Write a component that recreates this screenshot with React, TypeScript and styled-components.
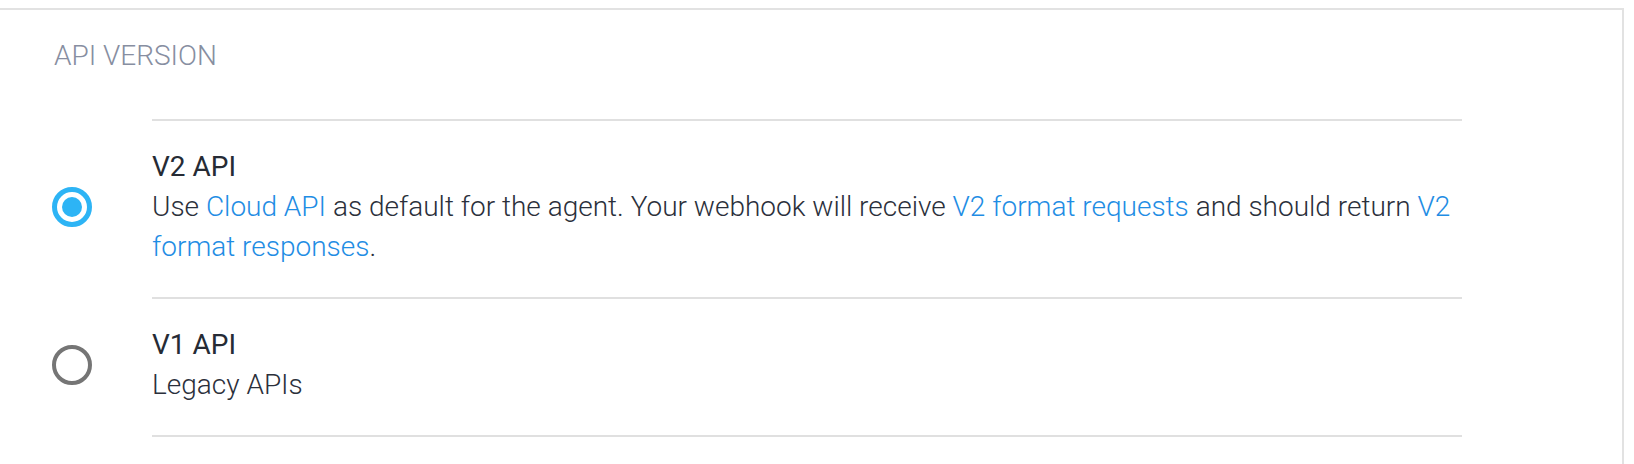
import React from "react";
import styled, { createGlobalStyle } from "styled-components";

const GlobalStyle = createGlobalStyle`
  html, body {
    margin: 0;
    padding: 0;
    background: #ffffff;
  }
  body {
    font-family: Roboto, "Liberation Sans", Arial, sans-serif;
    -webkit-font-smoothing: antialiased;
  }
`;

const Card = styled.section`
  box-sizing: border-box;
  width: 1624px;
  margin-top: 8px;
  border-top: 2px solid #e2e2e2;
  border-right: 2px solid #e2e2e2;
  background: #ffffff;
  padding: 26px 0 40px 52px;
`;

const SectionTitle = styled.h2`
  margin: 0 0 43px 2px;
  font-size: 28px;
  line-height: 40px;
  font-weight: 300;
  color: #878ea1;
  letter-spacing: 0;
`;

const Divider = styled.div`
  margin-left: 100px;
  width: 1310px;
  height: 2px;
  background: #e0e0e0;
`;

const Option = styled.label`
  display: flex;
  align-items: center;
  padding: 26px 0 30px;
  cursor: pointer;
`;

const RadioCol = styled.div`
  width: 100px;
  flex: none;
  display: flex;
  align-items: center;
`;

const Radio = styled.span<{ $checked?: boolean }>`
  box-sizing: border-box;
  width: 40px;
  height: 40px;
  border-radius: 50%;
  border: ${(p) => (p.$checked ? "5px solid #2db4f5" : "4px solid #757575")};
  display: flex;
  align-items: center;
  justify-content: center;
  &::after {
    content: "";
    display: ${(p) => (p.$checked ? "block" : "none")};
    width: 20px;
    height: 20px;
    border-radius: 50%;
    background: #2db4f5;
  }
`;

const Body = styled.div`
  width: 1310px;
  display: flex;
  flex-direction: column;
`;

const OptionTitle = styled.div`
  font-size: 28px;
  line-height: 40px;
  font-weight: 400;
  color: #262b35;
`;

const Description = styled.div`
  font-size: 28px;
  line-height: 40px;
  font-weight: 300;
  color: #2b303b;
`;

const Link = styled.a`
  color: #1f8de4;
  text-decoration: none;
`;

export default function App() {
  return (
    <>
      <GlobalStyle />
      <Card>
        <SectionTitle>API VERSION</SectionTitle>
        <Divider />
        <Option>
          <RadioCol>
            <Radio $checked />
          </RadioCol>
          <Body>
            <OptionTitle>V2 API</OptionTitle>
            <Description>
              Use <Link href="#">Cloud API</Link> as default for the agent. Your
              webhook will receive <Link href="#">V2 format requests</Link> and
              should return <Link href="#">V2 format responses</Link>.
            </Description>
          </Body>
        </Option>
        <Divider />
        <Option>
          <RadioCol>
            <Radio />
          </RadioCol>
          <Body>
            <OptionTitle>V1 API</OptionTitle>
            <Description>Legacy APIs</Description>
          </Body>
        </Option>
        <Divider />
      </Card>
    </>
  );
}
